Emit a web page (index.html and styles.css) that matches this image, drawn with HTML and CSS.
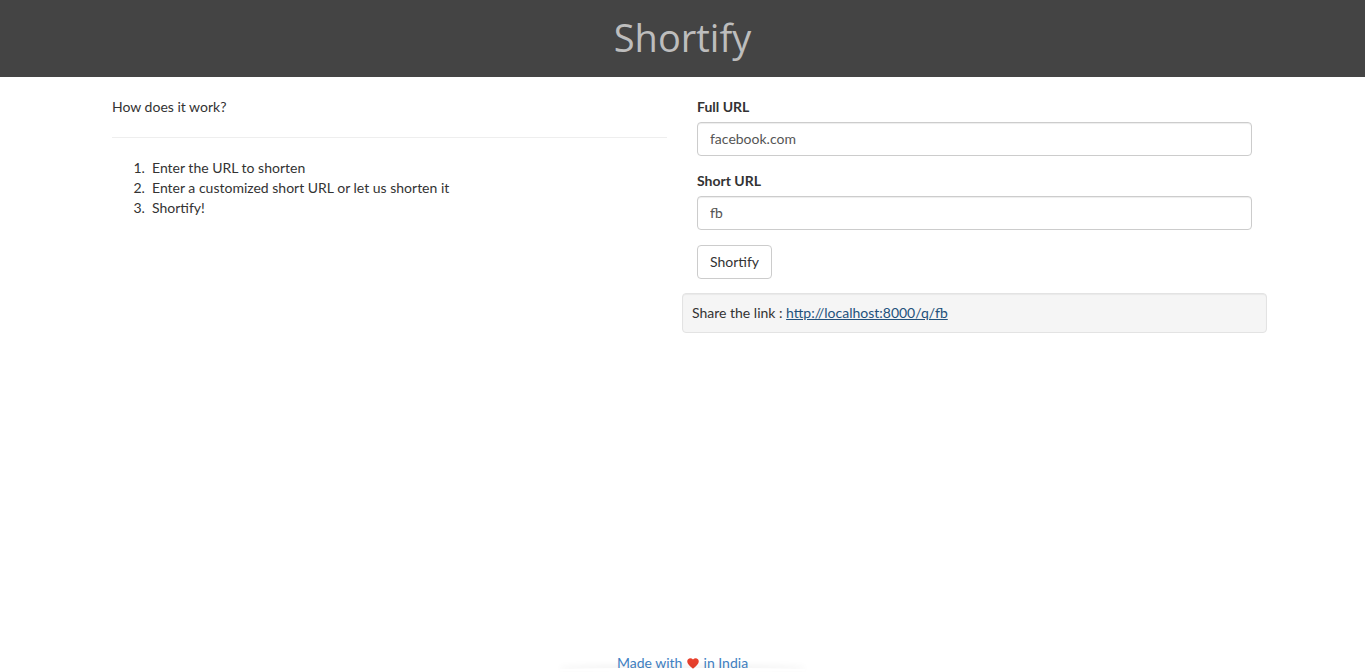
FILE: index.html
```html
<!DOCTYPE html>
<html>
<head>
<meta charset="utf-8">
<title>Shortify</title>
<link rel="stylesheet" href="styles.css">
</head>
<body>
<header class="topbar">
  <h1 class="brand">Shortify</h1>
</header>
<main class="container">
  <section class="col">
    <p class="intro">How does it work?</p>
    <hr class="divider">
    <ol class="steps">
      <li>Enter the URL to shorten</li>
      <li>Enter a customized short URL or let us shorten it</li>
      <li>Shortify!</li>
    </ol>
  </section>
  <section class="col col-right">
    <form class="form">
      <div class="form-group">
        <label class="label">Full URL</label>
        <input class="input" type="text" value="facebook.com">
      </div>
      <div class="form-group">
        <label class="label">Short URL</label>
        <input class="input" type="text" value="fb">
      </div>
      <button class="btn" type="button">Shortify</button>
    </form>
    <div class="well">Share the link : <a class="link" href="#">http://localhost:8000/q/fb</a></div>
  </section>
</main>
<footer class="footer">
  <div class="footer-text">Made with <svg class="heart" viewBox="0 0 24 22" width="12" height="11"><path d="M12 21.5 L10.3 20 C4.2 14.5 0.5 11.1 0.5 6.8 C0.5 3.4 3.2 0.7 6.6 0.7 C8.6 0.7 10.6 1.6 12 3.1 C13.4 1.6 15.4 0.7 17.4 0.7 C20.8 0.7 23.5 3.4 23.5 6.8 C23.5 11.1 19.8 14.5 13.7 20 Z" fill="#e8402c"/></svg> in India</div>
  <div class="footer-shadow"></div>
</footer>
</body>
</html>
```
FILE: styles.css
```css
* { box-sizing: border-box; }
html, body { margin: 0; padding: 0; }
body {
  font-family: Lato, "Open Sans", sans-serif;
  font-size: 14px;
  line-height: 20px;
  color: #333;
  background: #fff;
  height: 672px;
  display: flex;
  flex-direction: column;
  overflow: hidden;
}
.topbar {
  background: #444;
  height: 77px;
  display: flex;
  justify-content: center;
  flex-shrink: 0;
}
.brand {
  margin: 0;
  font-family: "Open Sans", sans-serif;
  font-weight: 400;
  font-size: 38px;
  line-height: 75px;
  color: #bdbdbd;
}
.container {
  width: 1171px;
  margin: 0 auto;
  display: flex;
  padding-top: 20px;
  flex: 1;
}
.col {
  width: 585px;
  padding: 0 15px;
}
.intro { margin: 0; }
.divider {
  margin: 20px 0 20px;
  border: 0;
  border-top: 1px solid #eee;
}
.steps {
  margin: 0;
  padding-left: 40px;
}
.steps li::marker {
  content: counter(list-item) ".\00a0\00a0";
}
.form { margin: 0; }
.form-group { margin-bottom: 15px; }
.label {
  display: block;
  font-weight: 700;
  margin-bottom: 5px;
}
.input {
  display: block;
  width: 555px;
  height: 34px;
  padding: 5px 12px 7px;
  font-family: Lato, sans-serif;
  font-size: 14px;
  line-height: 20px;
  color: #555;
  border: 1px solid #ccc;
  border-radius: 4px;
  box-shadow: inset 0 1px 1px rgba(0,0,0,.075);
  background: #fff;
}
.btn {
  display: block;
  height: 34px;
  padding: 6px 12px;
  font-family: Lato, sans-serif;
  font-size: 14px;
  line-height: 20px;
  color: #333;
  background: #fff;
  border: 1px solid #ccc;
  border-radius: 4px;
}
.well {
  margin: 14px -15px 0;
  height: 40px;
  padding: 9px 9px;
  background: #f5f5f5;
  border: 1px solid #e3e3e3;
  border-radius: 4px;
  box-shadow: inset 0 1px 1px rgba(0,0,0,.05);
}
.link {
  color: #23527c;
  text-decoration: underline;
}
.footer {
  flex-shrink: 0;
  height: 24px;
  display: flex;
  flex-direction: column;
  align-items: center;
  padding-top: 5px;
}
.footer-text {
  color: #3f82c4;
  line-height: 20px;
  white-space: nowrap;
}
.heart {
  display: inline-block;
  vertical-align: -1px;
  margin: 0 1px;
}
.footer-shadow {
  width: 245px;
  height: 10px;
  margin-top: -5px;
  border-radius: 40%;
  box-shadow: 0 -2px 6px rgba(0,0,0,.08);
}
```
